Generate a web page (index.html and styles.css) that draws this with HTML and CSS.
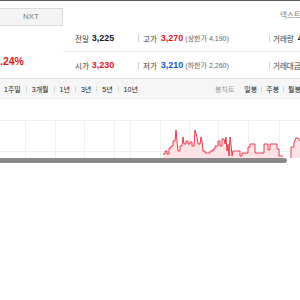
FILE: index.html
```html
<!DOCTYPE html>
<html lang="ko">
<head>
<meta charset="utf-8">
<link rel="stylesheet" href="styles.css">
</head>
<body>
<div class="topbar"></div>
<div class="summary">
  <div class="left">
    <div class="nxt">NXT</div>
    <div class="pct">+0.24%</div>
  </div>
  <div class="info">
    <div class="brand">넥스트레이드</div>
    <div class="row first">
      <div class="cell c1"><span class="lab">전일</span><span class="val">3,225</span></div>
      <div class="cell c2"><span class="sep"></span><span class="lab">고가</span><span class="val up">3,270</span><span class="sub">(상한가 4,190)</span></div>
      <div class="cell c3"><span class="sep"></span><span class="lab">거래량</span><span class="val">41,230</span></div>
    </div>
    <div class="row">
      <div class="cell c1"><span class="lab">시가</span><span class="val up">3,230</span></div>
      <div class="cell c2"><span class="sep"></span><span class="lab">저가</span><span class="val down">3,210</span><span class="sub">(하한가 2,260)</span></div>
      <div class="cell c3"><span class="sep"></span><span class="lab">거래대금</span></div>
    </div>
  </div>
</div>
<div class="band">
  <div class="tabs">
    <span class="tab">1주일</span><span class="sep"></span>
    <span class="tab">3개월</span><span class="sep"></span>
    <span class="tab">1년</span><span class="sep"></span>
    <span class="tab">3년</span><span class="sep"></span>
    <span class="tab">5년</span><span class="sep"></span>
    <span class="tab">10년</span>
  </div>
  <div class="tabs right">
    <span class="tab muted">봉차트</span>
    <span class="tab">일봉</span><span class="sep"></span>
    <span class="tab">주봉</span><span class="sep"></span>
    <span class="tab">월봉</span>
  </div>
</div>
<div class="chart">
  <svg width="300" height="59" viewBox="0 98 300 59">
    <g stroke="#efefef" stroke-width="1">
      <line x1="0" y1="119.5" x2="300" y2="119.5"/>
      <line x1="0" y1="150.5" x2="300" y2="150.5"/>
      <line x1="25.5" y1="119" x2="25.5" y2="157"/>
      <line x1="55.5" y1="119" x2="55.5" y2="157"/>
      <line x1="84.5" y1="119" x2="84.5" y2="157"/>
      <line x1="114.5" y1="119" x2="114.5" y2="157"/>
      <line x1="130.5" y1="119" x2="130.5" y2="157"/>
      <line x1="160.5" y1="119" x2="160.5" y2="157"/>
      <line x1="189.5" y1="119" x2="189.5" y2="157"/>
      <line x1="218.5" y1="119" x2="218.5" y2="157"/>
      <line x1="248.5" y1="119" x2="248.5" y2="157"/>
      <line x1="279.5" y1="119" x2="279.5" y2="157"/>
    </g>
    <polygon fill="#fde3e6" points="163,157 163,153 165,153 165,150 167,150 167,153 169,153 169,147 171,147 171,145 173,145 173,140 175,140 176,129 177,140 178,150 180,150 180,145 182,145 183,136 184,143 186,143 186,140 188,140 188,143 190,143 190,141 192,141 192,145 194,145 195,129 197,136 198,143 200,143 201,136 202,140 203,150 205,150 205,152 210,152 210,150 213,150 213,148 215,148 215,145 218,145 218,140 220,140 220,145 222,145 222,138 224,138 225,143 226,136 227,150 228,143 229,155 230,136 231,143 232,155 233,150 240,150 240,155 242,155 242,152 248,152 248,146 250,146 250,143 255,143 255,152 264,152 264,143 268,143 268,149 270,149 270,143 277,143 277,148 279,148 279,155 283,155 283,157"/>
    <polygon fill="#fde3e6" points="290,157 291,155 291,146 294,146 294,142 296,137 298,137 300,140 300,157"/>
    <polyline fill="none" stroke="#e8283a" stroke-width="0.9" points="163,153 165,153 165,150 167,150 167,153 169,153 169,147 171,147 171,145 173,145 173,140 175,140 176,129 177,140 178,150 180,150 180,145 182,145 183,136 184,143 186,143 186,140 188,140 188,143 190,143 190,141 192,141 192,145 194,145 195,129 197,136 198,143 200,143 201,136 202,140 203,150 205,150 205,152 210,152 210,150 213,150 213,148 215,148 215,145 218,145 218,140 220,140 220,145 222,145 222,138 224,138 225,143 226,136 227,150 228,143 229,155 230,136 231,143 232,155 233,150 240,150 240,155 242,155 242,152 248,152 248,146 250,146 250,143 255,143 255,152 264,152 264,143 268,143 268,149 270,149 270,143 277,143 277,148 279,148 279,155 283,155"/>
    <polyline fill="none" stroke="#e8283a" stroke-width="0.9" points="291,157 291,146 294,146 294,142 296,137 298,137 300,140"/>
  </svg>
  <div class="scroll"></div>
</div>
</body>
</html>
```

FILE: styles.css
```css
html, body {
  margin: 0;
  padding: 0;
  width: 300px;
  height: 300px;
  overflow: hidden;
  background: #fff;
  font-family: "Liberation Sans", "Noto Sans CJK KR", sans-serif;
  color: #333;
}

.topbar {
  height: 1px;
  background: #5e5e5e;
}

.summary {
  display: flex;
  white-space: nowrap;
}

.left {
  width: 63px;
  flex: none;
  padding-top: 7px;
  overflow: hidden;
}

.nxt {
  height: 16px;
  line-height: 16px;
  border: 1px solid #dcdcdc;
  border-left: none;
  background: #f4f4f4;
  color: #7a7a7a;
  font-size: 8px;
  text-align: center;
}

.pct {
  margin-top: 28px;
  margin-left: -12px;
  line-height: 14px;
  font-size: 10.5px;
  font-weight: bold;
  color: #e5141e;
}

.info {
  flex: 1;
  min-width: 0;
}

.brand {
  height: 24px;
  padding-left: 217px;
  line-height: 30px;
  font-size: 7.5px;
  color: #777;
  overflow: hidden;
}

.row {
  display: flex;
  align-items: center;
  height: 26px;
}

.row.first {
  border-bottom: 1px solid #ebebeb;
}

.cell {
  display: flex;
  align-items: center;
  overflow: hidden;
}

.c1 {
  width: 63px;
  padding-left: 12px;
  flex: none;
}

.c2 {
  width: 131px;
  flex: none;
}

.c3 {
  flex: 1;
  min-width: 0;
}

.sep {
  display: inline-block;
  width: 1px;
  height: 7px;
  background: #cfcfcf;
  flex: none;
}

.c2 .sep { margin-right: 4px; }
.c3 .sep { margin-right: 3px; }

.lab {
  font-size: 7.5px;
  color: #3a3a3a;
}

.val {
  margin-left: 3px;
  font-size: 9px;
  font-weight: bold;
  color: #222;
}

.c2 .val { margin-left: 4px; }
.c3 .val { margin-left: 4px; }

.val.up { color: #e5141e; }
.val.down { color: #1757c9; }

.sub {
  margin-left: 2px;
  font-size: 7px;
  color: #666;
}

.band {
  display: flex;
  justify-content: space-between;
  align-items: center;
  height: 19px;
  border-top: 1px solid #dedede;
  border-bottom: 1px solid #ececec;
  background: #f6f6f6;
  white-space: nowrap;
  overflow: hidden;
}

.tabs {
  display: flex;
  align-items: center;
  padding-left: 4px;
}

.tabs .sep {
  height: 6px;
  margin: 0 5px;
  background: #d4d4d4;
}

.tabs.right {
  padding-left: 0;
  margin-right: -1px;
}

.tabs.right .sep {
  margin: 0 4px;
}

.tab {
  font-size: 7px;
  color: #222;
}

.tab.muted {
  color: #999;
  margin-right: 10px;
}

.chart {
  display: flex;
  flex-direction: column;
}

.chart svg {
  display: block;
}

.scroll {
  width: 287px;
  height: 5px;
  background: #8a8a8a;
  border-radius: 0 3px 3px 0;
}
```
